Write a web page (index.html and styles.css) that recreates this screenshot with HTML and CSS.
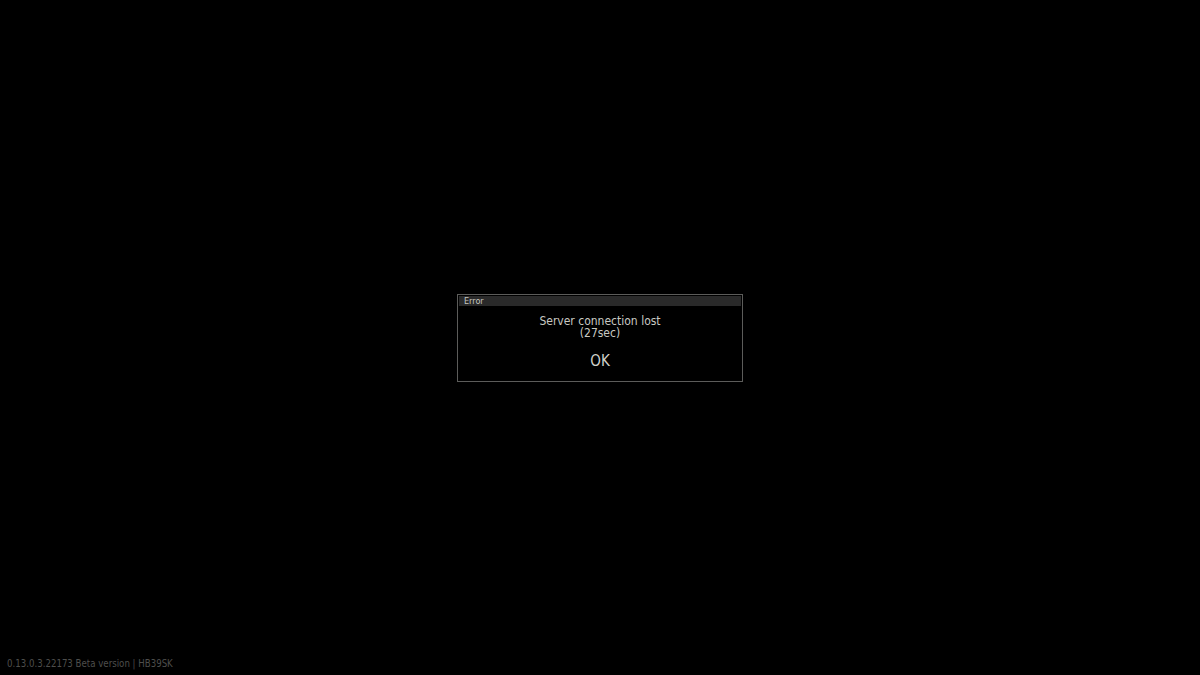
FILE: index.html
```html
<!DOCTYPE html>
<html>
<head>
<meta charset="utf-8">
<link rel="stylesheet" href="styles.css">
</head>
<body>
<div class="screen">
  <div class="spacer"></div>
  <div class="dialog">
    <div class="dialog-title">Error</div>
    <div class="dialog-body">
      <div class="message">Server connection lost<br>(27sec)</div>
      <div class="ok">OK</div>
    </div>
  </div>
  <div class="footer">
    <span class="version">0.13.0.3.22173 Beta version | HB39SK</span>
  </div>
</div>
</body>
</html>
```
FILE: styles.css
```css
html, body {
  margin: 0;
  padding: 0;
  background: #000;
}
.screen {
  width: 1200px;
  height: 675px;
  display: grid;
  grid-template-rows: 1fr auto 1fr;
  justify-items: center;
  font-family: "DejaVu Sans Condensed", "Liberation Sans", sans-serif;
}
.dialog {
  width: 282px;
  height: 84px;
  border: 1px solid #5c5c5a;
  padding: 1px;
  box-sizing: content-box;
  display: flex;
  flex-direction: column;
}
.dialog-title {
  height: 10px;
  background: #2a2a2a;
  color: #c6c6c0;
  font-size: 9px;
  line-height: 11px;
  padding-left: 5px;
}
.dialog-body {
  flex: 1;
  display: flex;
  flex-direction: column;
  align-items: center;
}
.message {
  margin-top: 9px;
  color: #c8c8c2;
  font-size: 12px;
  line-height: 12px;
  text-align: center;
}
.ok {
  margin-top: 13px;
  color: #d0d0ca;
  font-size: 15px;
  line-height: 18px;
}
.footer {
  justify-self: stretch;
  display: flex;
  align-items: flex-end;
  padding: 0 0 5px 7px;
}
.version {
  color: #4e4e4c;
  font-size: 9.6px;
  line-height: 12px;
}
```
